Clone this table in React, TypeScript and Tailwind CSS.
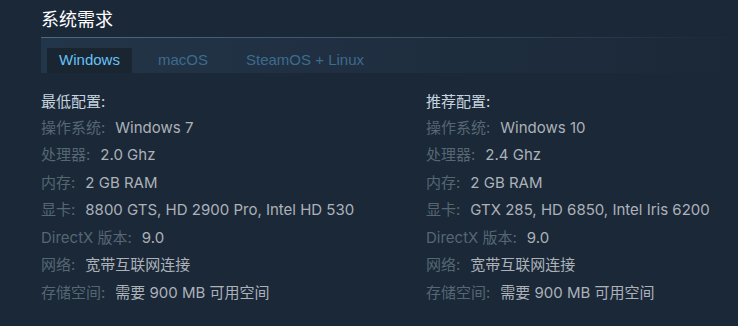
const minSpec: [string, string][] = [
  ["操作系统:", "Windows 7"],
  ["处理器:", "2.0 Ghz"],
  ["内存:", "2 GB RAM"],
  ["显卡:", "8800 GTS, HD 2900 Pro, Intel HD 530"],
  ["DirectX 版本:", "9.0"],
  ["网络:", "宽带互联网连接"],
  ["存储空间:", "需要 900 MB 可用空间"],
];

const recSpec: [string, string][] = [
  ["操作系统:", "Windows 10"],
  ["处理器:", "2.4 Ghz"],
  ["内存:", "2 GB RAM"],
  ["显卡:", "GTX 285, HD 6850, Intel Iris 6200"],
  ["DirectX 版本:", "9.0"],
  ["网络:", "宽带互联网连接"],
  ["存储空间:", "需要 900 MB 可用空间"],
];

const font = "font-['Inter','Noto_Sans_CJK_SC',sans-serif]";

function SpecColumn({ title, rows }: { title: string; rows: [string, string][] }) {
  return (
    <div className="w-[385px] shrink-0">
      <div className="flex h-[24px] items-center text-[15px] text-[#c6d4df]">{title}</div>
      {rows.map(([label, value]) => (
        <div key={label} className="flex h-[27.5px] items-center text-[15px]">
          <span className="text-[#556772]">{label}</span>
          <span className="ml-[10px] text-[#acb2b8]">{value}</span>
        </div>
      ))}
    </div>
  );
}

export default function App() {
  return (
    <div className={`h-[326px] w-[738px] overflow-hidden bg-[#1b2838] ${font}`}>
      <div className="pl-[41px] pt-[8px]">
        <h2 className="h-[29px] text-[18px] leading-[24px] text-white">系统需求</h2>
        <div className="h-px bg-gradient-to-r from-[#4e6a82] via-[#3a5468] to-transparent" />
        <div className="flex h-[35px] items-end gap-[26px] bg-gradient-to-r from-[#233548] to-[#1b2838] pl-[6px] font-['Liberation_Sans',sans-serif] text-[15px]">
          <div className="flex h-[25px] w-[85px] items-center justify-center bg-[#1a2532] text-[#67c1f5]">
            Windows
          </div>
          <div className="flex h-[25px] items-center text-[#3d6b8e]">macOS</div>
          <div className="flex h-[25px] items-center pl-[12px] text-[#3d6b8e]">SteamOS + Linux</div>
        </div>
        <div className="flex pt-[17px]">
          <SpecColumn title="最低配置:" rows={minSpec} />
          <SpecColumn title="推荐配置:" rows={recSpec} />
        </div>
      </div>
    </div>
  );
}
